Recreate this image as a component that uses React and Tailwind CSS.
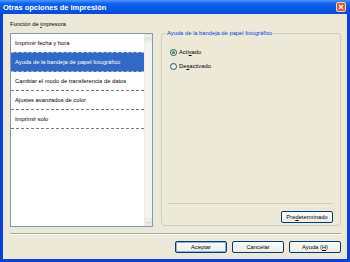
import React from 'react';

const items = [
  'Imprimir fecha y hora',
  'Ayuda de la bandeja de papel fotográfico',
  'Cambiar el modo de transferencia de datos',
  'Ajustes avanzados de color',
  'Imprimir solo',
];

function XpButton({ children, isDefault, className }) {
  return (
    <button
      className={
        'h-[12px] rounded-[2px] border border-[#003C74] bg-gradient-to-b from-white to-[#ECEBE6] text-[5.8px] leading-[8px] text-black ' +
        (isDefault ? 'shadow-[inset_0_0_0_1px_#8DB2E3] ' : '') +
        (className || '')
      }
    >
      {children}
    </button>
  );
}

function Radio({ checked, children }) {
  return (
    <div className="flex items-center h-[8px]">
      <span className="w-[7px] h-[7px] rounded-full border border-[#1C5180] bg-gradient-to-br from-[#DCDCD7] to-white flex items-center justify-center">
        {checked && <span className="w-[3px] h-[3px] rounded-full bg-[#21A121]" />}
      </span>
      <span className="ml-[2px]">{children}</span>
    </div>
  );
}

function App() {
  return (
    <div
      className="w-[350px] h-[262px] flex flex-col bg-[#0842D8] px-[3px] pb-[3px] overflow-hidden"
      style={{ fontFamily: '"Liberation Sans", Arial, sans-serif' }}
    >
      {/* title bar */}
      <div className="shrink-0 -mx-[3px] h-[14px] flex items-center justify-between pl-[3px] pr-[4px] bg-[#0A5BE8] bg-[linear-gradient(to_bottom,#4D97FF_0%,#0F62EE_25%,#0555E3_70%,#0A4AD0_100%)]">
        <span className="text-white font-bold text-[7.5px] leading-[9px]">
          Otras opciones de impresión
        </span>
        <div className="shrink-0 w-[10px] h-[10px] rounded-[2px] border border-[#F4D0C0] bg-[#E2592D] flex items-center justify-center">
          <svg width="6" height="6" viewBox="0 0 6 6">
            <path d="M1 1 L5 5 M5 1 L1 5" stroke="#FFFFFF" strokeWidth="1.1" />
          </svg>
        </div>
      </div>

      {/* body */}
      <div className="flex-1 bg-[#ECE9D8] flex flex-col pl-[7px] pr-[6px] text-[5.8px] text-black">
        <div className="h-[15px] pt-[6px] leading-[8px]">
          Función de <u>i</u>mpresora
        </div>

        <div className="flex items-start">
          {/* list box */}
          <div className="mt-[4px] w-[143px] h-[194px] border border-[#7F9DB9] bg-white flex">
            <div className="flex-1 flex flex-col">
              {items.map((t, i) => (
                <div
                  key={i}
                  className={
                    'h-[19px] flex items-center pl-[4px] border-b border-dashed ' +
                    (i === 1
                      ? 'bg-[#316AC5] text-white border-[#9DB4DC] border-t -mt-[1px] h-[20px]'
                      : 'border-[#7A7A7A]')
                  }
                >
                  {t}
                </div>
              ))}
            </div>
            <div className="w-[8px] bg-[#F5F4EE] border-l border-[#EEEDE5] flex flex-col justify-between">
              <div className="h-[8px] bg-[#F1F0E9] border border-[#E8E7DF] rounded-[1px] flex items-center justify-center">
                <svg width="5" height="3" viewBox="0 0 5 3">
                  <path d="M0.5 2.5 L2.5 0.5 L4.5 2.5" fill="none" stroke="#C9C7BA" strokeWidth="1" />
                </svg>
              </div>
              <div className="h-[8px] bg-[#F1F0E9] border border-[#E8E7DF] rounded-[1px] flex items-center justify-center">
                <svg width="5" height="3" viewBox="0 0 5 3">
                  <path d="M0.5 0.5 L2.5 2.5 L4.5 0.5" fill="none" stroke="#C9C7BA" strokeWidth="1" />
                </svg>
              </div>
            </div>
          </div>

          {/* group box */}
          <fieldset className="ml-[8px] w-[180px] h-[197px] border border-[#D0D0BF] rounded-[3px] pl-[8px] pr-[7px]">
            <legend className="ml-[-4px] px-[1px] leading-[8px] text-[#0046D5]">
              Ayuda de la bandeja de papel fotográfico
            </legend>
            <div className="flex flex-col gap-[6px] mt-[11px]">
              <Radio checked>
                Acti<u>v</u>ado
              </Radio>
              <Radio>
                De<u>s</u>activado
              </Radio>
            </div>
            <div className="mt-[133px] -ml-[2px] border-t border-[#D0D0BF]" />
            <div className="flex justify-end mt-[7px]">
              <XpButton className="w-[52px] h-[11px]">
                Pre<u>d</u>eterminado
              </XpButton>
            </div>
          </fieldset>
        </div>

        <div className="mt-[6px] border-t border-[#ACA899] border-b border-b-white" />

        <div className="mt-[6px] flex justify-end gap-[5px]">
          <XpButton isDefault className="w-[52px]">Aceptar</XpButton>
          <XpButton className="w-[52px]">Cancelar</XpButton>
          <XpButton className="w-[52px]">
            Ayuda (<u>H</u>)
          </XpButton>
        </div>
      </div>
    </div>
  );
}

export default App;
